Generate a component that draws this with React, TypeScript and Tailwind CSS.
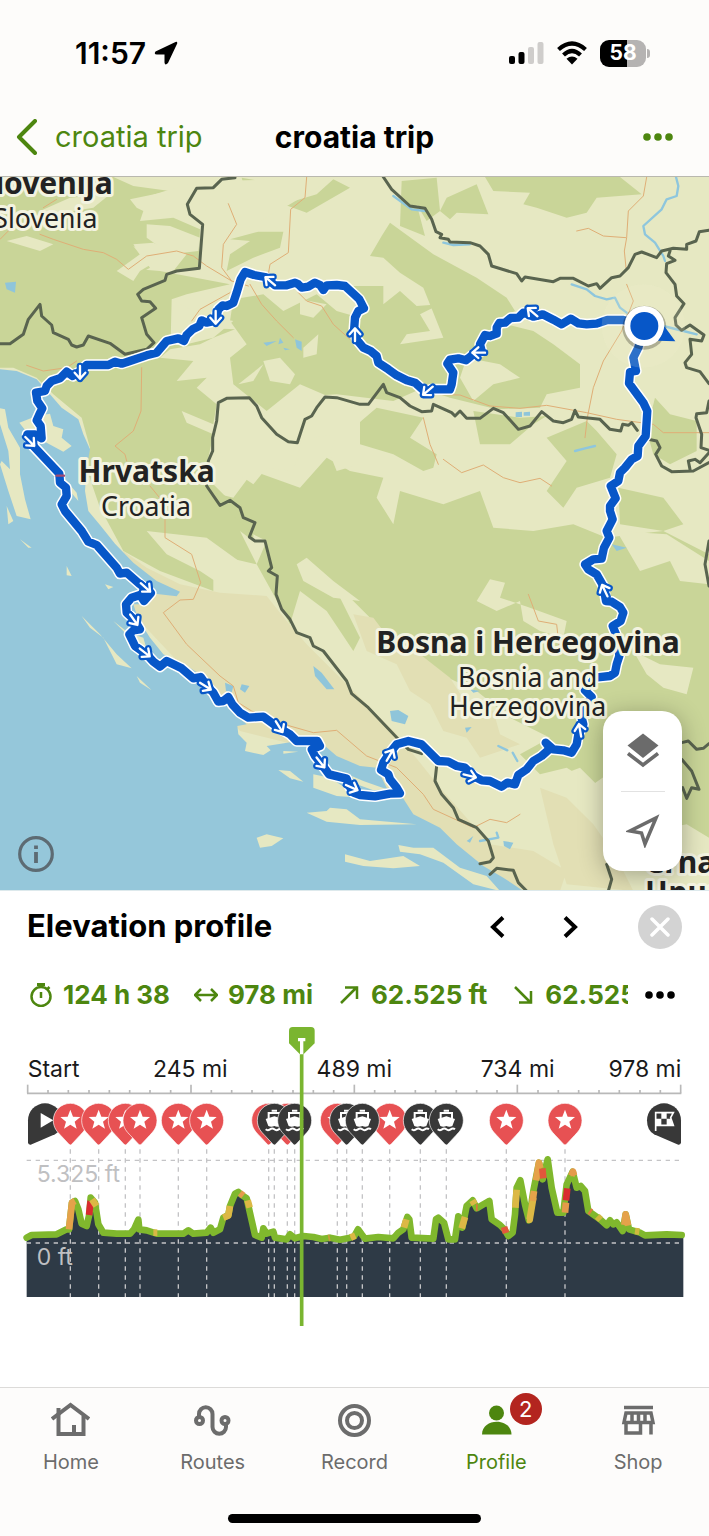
import type { ReactNode } from "react";

const routePath =
  "M1932 465 L1870 447 L1822 447 L1790 458 L1760 460 L1735 457 L1712 443 L1685 460 L1660 446 L1628 430 L1600 437 L1590 432 L1570 425 L1555 440 L1532 441 L1515 455 L1498 456 L1490 470 L1490 488 L1470 495 L1455 492 L1440 520 L1445 540 L1420 550 L1398 568 L1375 562 L1350 566 L1342 578 L1360 605 L1355 640 L1350 655 L1295 655 L1275 662 L1245 635 L1220 628 L1190 613 L1165 595 L1135 575 L1130 555 L1112 540 L1090 530 L1072 508 L1062 480 L1065 440 L1075 420 L1092 412 L1078 385 L1062 370 L1035 345 L1010 342 L980 343 L970 357 L960 342 L945 335 L925 347 L905 350 L895 340 L885 335 L860 343 L825 343 L795 318 L762 312 L735 303 L722 325 L710 365 L700 395 L680 405 L668 403 L655 415 L645 450 L620 455 L605 448 L598 465 L578 475 L560 492 L552 510 L535 502 L500 510 L470 545 L440 553 L390 570 L365 578 L345 572 L325 582 L260 582 L240 602 L218 615 L200 602 L180 622 L155 630 L140 645 L135 660 L108 665 L112 690 L127 712 L118 730 L110 748 L122 765 L125 802 L105 790 L82 790 L100 825 L178 908 L180 935 L198 950 L200 975 L185 1000 L195 1020 L245 1080 L265 1112 L290 1122 L350 1190 L360 1208 L380 1205 L420 1240 L453 1266 L432 1290 L420 1272 L395 1280 L378 1300 L380 1325 L402 1345 L420 1375 L400 1378 L388 1390 L405 1425 L440 1450 L460 1472 L480 1487 L500 1470 L545 1492 L580 1522 L602 1518 L625 1550 L640 1565 L655 1592 L670 1590 L685 1578 L697 1600 L720 1625 L745 1640 L790 1637 L835 1670 L870 1690 L890 1710 L952 1710 L960 1725 L935 1735 L945 1755 L965 1780 L987 1810 L1040 1823 L1048 1845 L1060 1865 L1080 1872 L1125 1876 L1170 1868 L1200 1867 L1190 1850 L1170 1825 L1165 1810 L1143 1797 L1150 1775 L1170 1745 L1190 1720 L1225 1710 L1265 1720 L1290 1745 L1315 1770 L1345 1772 L1370 1785 L1395 1790 L1420 1815 L1445 1828 L1470 1830 L1505 1847 L1522 1835 L1545 1840 L1555 1812 L1580 1795 L1600 1770 L1625 1755 L1650 1733 L1637 1715 L1660 1735 L1690 1738 L1715 1745 L1730 1720 L1735 1690 L1750 1660 L1740 1622 L1760 1600 L1775 1578 L1755 1558 L1785 1520 L1830 1515 L1845 1505 L1850 1480 L1858 1455 L1852 1400 L1838 1365 L1862 1350 L1870 1325 L1860 1308 L1835 1292 L1818 1290 L1810 1245 L1790 1210 L1765 1195 L1755 1180 L1780 1165 L1805 1163 L1812 1130 L1828 1100 L1820 1080 L1838 1045 L1830 1020 L1830 1005 L1847 982 L1832 945 L1855 930 L1860 905 L1875 890 L1895 865 L1913 855 L1915 825 L1937 795 L1942 720 L1930 695 L1887 637 L1890 603 L1908 600 L1900 560 L1915 530 Z";

const forests = [
  "M0 18 H340 L400 45 L510 60 L390 85 L410 110 L430 120 L420 150 L520 140 L600 175 L595 290 L520 300 L560 250 L490 200 L505 245 L430 240 L400 225 L450 290 L380 330 L360 290 L480 300 L690 340 L560 370 L515 385 L512 510 L600 470 L705 475 L640 500 L600 520 L510 535 L480 560 L580 570 L530 630 L620 620 L590 650 L650 700 L640 760 L545 720 L560 755 L640 790 L625 860 L640 940 L700 1000 L760 1050 L760 1110 L720 1080 L770 1180 L640 1150 L640 1260 L480 1200 L370 1140 L300 1010 L255 880 L270 830 L245 740 L160 670 L110 620 L40 590 L0 590 Z",
  "M700 385 L790 370 L850 420 L950 370 L1010 420 L1080 440 L1200 600 L1270 650 L1180 690 L1010 670 L975 672 L900 640 L800 720 L700 640 L690 560 L740 520 L690 450 Z",
  "M850 100 L950 70 L1000 25 L1050 50 L920 125 Z",
  "M775 182 L850 182 L840 230 L760 260 L680 300 L690 250 L750 210 L690 205 Z",
  "M725 20 L870 45 L840 100 L740 75 Z",
  "M1205 30 L1310 20 L1320 120 L1280 150 L1250 100 L1275 195 L1200 165 Z",
  "M1340 80 L1430 40 L1465 130 L1370 125 L1350 145 L1320 120 Z",
  "M1455 18 H1860 L1925 70 L1790 80 L1760 125 L1700 140 L1610 110 L1570 100 L1590 65 L1480 60 Z",
  "M1145 195 L1170 155 L1300 250 L1430 320 L1520 380 L1545 420 L1480 450 L1600 480 L1660 520 L1740 580 L1740 650 L1640 670 L1620 710 L1490 715 L1350 680 L1290 660 L1200 600 L1080 460 L1060 345 L1150 345 L1150 400 L1200 360 L1250 405 L1320 400 L1260 430 L1290 480 L1220 490 L1200 520 L1330 500 L1270 350 L1200 305 L1150 260 L1110 255 Z",
  "M1060 770 L1130 710 L1270 740 L1230 800 L1310 850 L1300 890 L1270 900 L1180 850 L1080 820 Z",
  "M1420 720 L1560 740 L1640 735 L1600 760 L1530 820 L1440 820 Z",
  "M1640 800 L1760 750 L1790 780 L1850 850 L1830 920 L1730 950 L1690 1010 L1640 960 L1700 870 Z",
  "M1965 680 L2010 730 L2090 750 L2090 840 L2010 880 L1960 850 L1940 780 Z",
  "M1855 950 L1990 980 L2050 1060 L1990 1080 L1860 1060 Z",
  "M620 960 L700 980 L760 900 L900 950 L980 860 L1050 900 L1150 920 L1130 980 L1180 1060 L1200 960 L1330 1000 L1440 960 L1480 1070 L1600 1080 L1720 1060 L1820 1100 L1900 1090 L1990 1080 L2127 1150 V2000 L2060 1960 L1960 1980 L1890 1860 L1850 1790 L1780 1840 L1700 1790 L1620 1810 L1560 1750 L1650 1700 L1530 1640 L1430 1560 L1300 1500 L1240 1440 L1150 1380 L1050 1280 L1010 1260 L1080 1400 L1060 1440 L980 1320 L900 1260 L870 1360 L820 1270 L770 1180 L800 1110 L760 1090 Z",
];

const clearings = [
  "M400 90 L560 40 L600 90 L590 150 L520 130 L440 125 Z",
  "M440 160 L510 165 L600 200 L595 240 L510 250 L440 200 Z",
  "M350 300 L420 250 L400 220 L460 215 L520 240 L420 300 L400 330 Z",
  "M120 120 L210 80 L330 70 L280 110 L160 130 L130 170 Z",
  "M20 210 L80 195 L160 220 L120 240 L70 225 Z",
  "M660 690 L750 685 L800 760 L870 820 L900 830 L880 900 L800 890 L760 940 L700 900 L650 830 Z",
  "M920 740 L980 690 L1080 720 V880 L1010 900 L990 850 L1010 790 L940 800 L890 870 Z",
  "M715 640 L790 580 L760 630 Z",
  "M790 570 L840 560 L885 610 L870 640 L810 630 Z",
  "M520 390 L600 430 L700 450 L640 500 L560 520 L515 520 Z",
  "M900 385 L980 400 L940 440 L900 430 Z M910 530 L955 490 L950 550 L910 560 Z",
  "M1400 560 L1500 580 L1560 620 L1480 640 L1420 690 L1380 620 Z",
  "M640 30 L1000 22 L870 100 L780 150 L680 200 L620 290 L600 180 L620 100 Z",
  "M440 1080 L620 1100 L730 1180 L760 1200 L690 1260 L600 1200 L500 1150 Z",
  "M890 1180 L920 1160 L1000 1230 L1080 1290 L1000 1280 L910 1230 Z",
  "M1430 1290 L1470 1225 L1515 1235 L1500 1280 L1590 1310 L1700 1350 L1690 1400 L1620 1380 L1570 1350 L1560 1290 L1490 1320 Z",
  "M1850 1080 L2000 1090 L2127 1170 L2127 1240 L2040 1230 L2010 1170 L1920 1200 Z",
  "M1900 1440 L1980 1480 L2080 1490 L2060 1570 L1990 1550 L1940 1510 Z",
  "M1660 1820 L1740 1790 L1830 1880 L1900 1890 L1950 1990 L2127 2030 V2160 H1850 L1700 1980 Z",
];

// dry karst country behind the coast
const karst =
  "M370 1140 L440 1190 L540 1240 L660 1265 L800 1275 L860 1350 L920 1420 L1040 1540 L1200 1700 L1320 1850 L1470 2020 L1600 2040 L1700 2100 L1680 2160 H1560 L1380 2040 L1200 1900 L1000 1750 L720 1680 L560 1500 L400 1330 Z M1060 1330 L1120 1340 L1180 1420 L1260 1450 L1350 1520 L1400 1600 L1480 1620 L1500 1690 L1560 1720 L1440 1760 L1400 1700 L1330 1680 L1290 1600 L1230 1560 L1190 1480 L1100 1440 Z M1620 1850 L1700 1880 L1780 1960 L1850 2060 L1900 2160 L1700 2140 L1660 2020 Z";

const sea =
  "M0 595 L50 600 L110 625 L150 670 L185 710 L235 745 L250 790 L270 835 L260 890 L255 960 L265 1020 L300 1062 L345 1118 L400 1175 L470 1230 L540 1262 L530 1276 L465 1268 L440 1300 L400 1300 L415 1345 L450 1400 L490 1450 L545 1475 L600 1510 L650 1570 L700 1625 L740 1660 L712 1665 L715 1690 L740 1715 L735 1740 L790 1752 L812 1738 L800 1725 L880 1712 L930 1700 L975 1725 L1010 1755 L1080 1785 L1130 1790 L1160 1850 L1205 1875 L1240 1930 L1320 1970 L1370 2020 L1450 2085 L1510 2120 L1570 2160 H0 Z";

const islands = [
  "M58 755 L110 735 L150 728 L160 765 L190 775 L185 800 L215 825 L190 842 L140 815 L85 790 Z",
  "M0 712 L15 715 L25 770 L60 830 L60 910 L75 985 L92 1045 L50 1035 L25 960 L0 880 L5 870 L30 895 L25 840 L0 760 Z",
  "M195 925 L230 965 L235 990 L205 955 Z M20 1005 L40 1050 L25 1060 Z",
  "M60 1105 L95 1130 L85 1130 Z M200 1185 L215 1215 L200 1213 Z M315 1240 L340 1248 L325 1255 Z",
  "M245 1335 L300 1390 L350 1450 L395 1492 L350 1480 L310 1400 L270 1370 Z",
  "M340 1350 L385 1385 L430 1400 L440 1435 L390 1400 Z M410 1515 L455 1558 L420 1535 Z",
  "M835 1797 L870 1800 L910 1832 L870 1822 Z M850 1740 L895 1742 L850 1748 Z",
  "M940 1810 L990 1820 L1050 1860 L1080 1880 L1010 1875 L940 1850 Z",
  "M920 1925 L980 1920 L990 1910 L1040 1915 L1080 1945 L1250 1960 L1080 1962 L980 1952 Z",
  "M770 2000 L800 1990 L850 2002 L815 2025 L780 2030 Z",
  "M1035 2050 L1110 2070 L1210 2055 L1260 2085 L1180 2092 L1090 2085 L1035 2072 Z",
  "M1195 2022 L1240 2030 L1300 2030 L1380 2090 L1460 2115 L1500 2160 L1420 2140 L1330 2075 L1260 2050 L1200 2042 Z",
  "M1055 1815 L1090 1830 L1160 1855 L1120 1858 L1070 1840 Z",
];

const lakes = [
  "M15 335 L48 332 L45 365 L20 355 Z",
  "M790 515 L830 510 L800 525 Z M840 500 L850 515 L835 520 Z M885 505 L905 512 L905 540 L890 530 Z M850 530 L870 535 L855 538 Z",
  "M675 1535 L700 1545 L695 1565 L678 1560 Z M725 1540 L748 1545 L735 1565 L720 1555 Z",
  "M940 1485 L965 1505 L1003 1555 L980 1555 L945 1515 Z",
  "M1170 1620 L1195 1617 L1225 1635 L1215 1660 L1175 1650 Z M1395 1670 L1415 1668 L1400 1685 Z M1410 1555 L1440 1560 L1420 1565 Z",
  "M1510 2010 L1540 2015 L1530 2035 L1512 2025 Z M1400 2010 L1420 1995 L1410 2015 Z",
  "M1835 1120 L1880 1130 L1850 1140 Z M1547 724 L1566 722 V738 H1547 Z M1571 724 L1590 722 V734 H1571 Z",
];

const rivers = [
  "M2028 18 L2035 45 L2030 75 L2000 85 L1985 115 L1930 165 L1935 190 L1965 215 L1990 255 L1995 270",
  "M1715 340 L1760 355 L1785 375 L1820 385 L1845 380 L1860 410 L1880 425",
  "M1725 840 L1755 832 L1785 825",
  "M1495 1725 L1522 1738 M1538 1745 L1552 1770 M1490 1985 L1495 2000 L1440 2010",
  "M1180 75 L1235 115 L1275 120 M1330 215 L1360 222 L1410 220 M1990 465 L2050 480 L2090 490",
];

const borders = [
  "M0 518 L30 518 L70 490 L85 445 L120 400 L125 435 L155 462 L160 485 L205 505 L215 522 L230 528 L250 522 L265 495 L330 517 L375 550 L440 535 L462 515 L440 490 L425 440 L467 412 L450 392 L425 390 L413 370 L430 355 L495 328 L500 310 L530 300 L598 292 L605 200 L608 160 L570 130 L562 100 L590 52 L640 50 L665 25 L705 20",
  "M1150 18 L1175 55 L1230 105 L1275 112 L1295 145 L1308 182 L1325 190 L1320 200 L1345 205 L1350 213 L1410 215 L1440 225 L1465 250 L1475 285 L1550 308 L1565 330 L1575 318 L1660 332 L1680 322 L1720 322 L1765 345 L1790 338 L1800 352 L1835 320 L1860 315 L1885 290 L1905 250 L1925 243 L1970 260 L1985 240 L2020 232 L2060 235 L2060 220 L2088 210 L2098 182 L2127 178",
  "M2010 240 L2005 255 L2025 268 L2000 278 L1998 305 L2025 340 L2030 375 L2052 398 L2025 440 L2028 462 L2045 478 L2070 462 L2112 492 L2105 510 L2070 505 L2075 550 L2055 575 L2060 590 L2100 602 L2127 638",
  "M2127 690 L2120 725 L2090 728 L2088 740 L2105 790 L2103 830 L2127 838 M1945 805 L1970 810 L1980 830 L1967 850 L1985 885 L2015 902 L2080 900 L2127 875 M2070 895 L2065 870 L2085 865 L2100 875 L2127 845",
  "M1912 778 L1895 755 L1885 763 L1868 760 L1862 780 L1830 775 L1800 745 L1735 738 L1725 718 L1715 745 L1690 755 L1660 750 L1625 722 L1590 765 L1555 775 L1510 725 L1480 712 L1440 742 L1400 742 L1380 720 L1365 735 L1355 725 L1300 700 L1295 720 L1265 722 L1230 705 L1200 680 L1160 665 L1150 640 L1105 700 L1080 700 L1010 680 L975 678 L950 710 L935 735 L915 745 L892 815 L865 812 L830 790 L785 740 L770 705 L748 680 L680 682 L655 695 L650 750 L638 800 L638 840 L625 870 L620 945 L660 1003 L690 988 L720 1010 L730 1040 L765 1055 L748 1098 L765 1110 L795 1110 L815 1190 L805 1200 L832 1215 L828 1270 L845 1315 L870 1345 L890 1385 L930 1400 L940 1425 L970 1440 L1040 1530 L1055 1568 L1105 1610 L1195 1705 L1225 1735 L1265 1748",
  "M1310 1785 L1305 1830 L1325 1870 L1360 1910 L1375 1945 L1430 1970 L1465 2010 L1480 2060 L1470 2072 L1440 2078 M1470 2110 L1490 2092 L1540 2098 L1555 2135 L1580 2160",
  "M1820 2080 L1835 2125 L1825 2160 M2045 1715 L2065 1710 L2090 1735 L2110 1732 L2127 1718 M2045 1765 L2075 1800 L2097 1855 L2075 1850 L2060 1882 L2048 1850 M2127 1110 L2115 1180 L2127 1245",
];

const roads = [
  "M120 190 L160 205 L250 235 L310 245 L350 265 L385 295 L440 255 L530 240 L580 255 L620 285 L695 330 L745 345",
  "M685 98 L710 160 L670 220 L665 290 L695 330",
  "M920 18 L915 80 L872 115 L865 245 L810 280 L805 310",
  "M750 340 L785 400 L830 450 L880 500 M895 365 L920 390 L965 405 L1000 460 L1050 505",
  "M690 365 L600 415 L575 450 M425 590 L423 720 L400 780 L345 825 L375 850 L380 870",
  "M80 583 L130 600 L200 590 L230 570 M450 945 L495 1000 V1100 L575 1150 L602 1235 L580 1285 L540 1287 L490 1325 L560 1420 L660 1515 L700 1545 L715 1595 L755 1620 L870 1665 L940 1685 L1010 1678 L1100 1755 L1190 1790 L1270 1870 L1300 1915 L1420 1970 L1470 1945 L1520 1955 L1560 1930",
  "M1940 18 L1930 75 L1885 120 L1880 200 L1873 240 L1878 290 M1730 180 L1765 172 L1810 195 L1878 200",
  "M1880 340 L1900 390 L1865 480 L1810 570 L1780 650 L1762 740 L1755 800",
  "M1290 670 L1380 672 L1470 705 L1560 712 L1640 703 L1760 725 L1850 745 L1960 760 L1990 785 H2127",
  "M1270 740 L1290 820 L1315 880 M1330 865 L1385 905 L1450 882 L1510 920 L1560 935 L1620 922 L1655 945",
  "M1585 1270 L1615 1350 L1670 1360 L1680 1450 M130 110 L170 85 M0 205 L30 175",
];

const arrows: [number, number, number][] = [
  [810, 330, -140],
  [647, 440, 90],
  [240, 605, 90],
  [90, 812, 45],
  [1065, 490, -90],
  [437, 1250, 42],
  [402, 1347, 55],
  [435, 1445, 38],
  [617, 1546, 32],
  [838, 1668, 58],
  [962, 1775, 52],
  [1056, 1850, 24],
  [1170, 1752, -60],
  [1410, 1815, 14],
  [1740, 1677, -100],
  [1814, 1258, -115],
  [1597, 423, -140],
  [1435, 545, 180],
  [1283, 660, 140],
];

function RouteMap() {
  return (
    <svg viewBox="0 18 2127 2139" className="block h-auto w-full" role="img" aria-label="Route map">
      <rect y="18" width="2127" height="2139" fill="#e6e8c2" />
      <g fill="#c9d598">
        {forests.map((d) => (
          <path key={d} d={d} />
        ))}
      </g>
      <g fill="#e6e8c2">
        {clearings.map((d) => (
          <path key={d} d={d} />
        ))}
      </g>
      <path d={karst} fill="#e2dfb4" />
      <path d={sea} fill="#95c7da" />
      <g fill="#e6e8c2">
        {islands.map((d) => (
          <path key={d} d={d} />
        ))}
      </g>
      <g fill="#8fc5da">
        {lakes.map((d) => (
          <path key={d} d={d} />
        ))}
      </g>
      <g fill="none" strokeLinejoin="round" strokeLinecap="round">
        <g stroke="#8ec6dd" strokeWidth="7">
          {rivers.map((d) => (
            <path key={d} d={d} />
          ))}
        </g>
        <g stroke="#dfae76" strokeWidth="3">
          {roads.map((d) => (
            <path key={d} d={d} />
          ))}
        </g>
        <g stroke="#59644f" strokeWidth="9">
          {borders.map((d) => (
            <path key={d} d={d} />
          ))}
        </g>
        <path d={routePath} stroke="#fff" strokeWidth="34" />
        <path d={routePath} stroke="#0757c8" strokeWidth="25" />
        <path d="M170 914 H192" stroke="#a3486f" strokeWidth="7" />
        {arrows.map(([x, y, angle]) => (
          <g key={`${x}-${y}`} transform={`translate(${x} ${y}) rotate(${angle})`}>
            <path d="M-20 0 H18 M0 -16 L18 0 L0 16" stroke="#0757c8" strokeWidth="20" />
            <path d="M-20 0 H18 M0 -16 L18 0 L0 16" stroke="#fff" strokeWidth="7" />
          </g>
        ))}
      </g>

      {/* current position */}
      <circle cx="1930" cy="465" r="125" fill="#f2f0d4" opacity="0.16" />
      <circle cx="1933" cy="470" r="66" fill="#000" opacity="0.25" />
      <circle cx="1933" cy="465" r="60" fill="#fff" />
      <path d="M1974 509 L2026 511 L1993 466 Q1990 490 1974 509 Z" fill="#0757c8" />
      <circle cx="1933" cy="465" r="42" fill="#0757c8" />

      <g
        className="font-['Noto_Sans',sans-serif]"
        fill="#222"
        stroke="#f3f3e0"
        strokeWidth="18"
        strokeLinejoin="round"
        paintOrder="stroke"
      >
        <g fontSize="90" fontWeight="700">
          <text x="338" y="70" textAnchor="end">Slovenija</text>
          <text x="440" y="934" textAnchor="middle">Hrvatska</text>
          <text x="1584" y="1447" textAnchor="middle">Bosna i Hercegovina</text>
          <text x="1935" y="2105">Crna Gora</text>
          <text x="1935" y="2197">Црна Гора</text>
        </g>
        <g fontSize="80">
          <text x="292" y="172" textAnchor="end">Slovenia</text>
          <text x="438" y="1036" textAnchor="middle">Croatia</text>
          <text x="1583" y="1549" textAnchor="middle">Bosnia and</text>
          <text x="1583" y="1634" textAnchor="middle">Herzegovina</text>
        </g>
      </g>
    </svg>
  );
}

const profile =
  "80,440 95,432 170,430 200,415 207,415 216,335 225,330 235,355 245,398 260,405 268,370 272,320 285,335 295,400 310,425 350,428 390,428 402,415 415,386 418,415 440,418 470,428 550,428 565,418 580,428 620,425 632,410 640,425 660,415 670,380 685,372 690,345 705,308 715,303 725,312 740,322 752,375 765,432 785,440 790,412 800,428 820,422 825,440 860,445 870,430 885,442 910,435 940,438 965,444 990,440 1020,446 1050,440 1063,435 1074,415 1085,430 1095,443 1135,438 1180,442 1195,425 1210,415 1222,378 1228,385 1235,440 1300,443 1308,385 1315,380 1332,395 1345,445 1365,445 1375,376 1387,410 1400,345 1418,328 1430,352 1450,340 1468,330 1475,385 1500,402 1513,415 1525,435 1538,425 1545,370 1550,290 1561,268 1575,340 1587,388 1600,300 1617,215 1628,265 1643,205 1655,290 1672,365 1690,365 1700,280 1718,242 1730,290 1742,285 1755,300 1765,360 1800,385 1820,403 1830,388 1840,400 1850,394 1868,420 1877,370 1887,415 1920,425 1935,433 2000,430 2045,432";

const slopes: [string, string][] = [
  ["#e5a24a", "207,415 216,335 225,330"],
  ["#d92b2f", "267,372 272,330"],
  ["#dcb845", "276,325 289,345"],
  ["#d9b845", "460,425 472,425"],
  ["#dcb845", "670,380 685,374 690,345"],
  ["#e59a4a", "720,306 730,314"],
  ["#dcb845", "743,328 749,350"],
  ["#c99a3a", "985,441 990,440"],
  ["#dcb845", "1052,440 1066,434"],
  ["#dcb845", "1212,410 1219,385"],
  ["#dcb845", "1385,412 1395,378"],
  ["#dcb845", "1417,328 1424,340"],
  ["#d9763f", "1428,350 1433,350"],
  ["#e2573b", "1512,408 1518,426"],
  ["#dcb845", "1546,350 1550,296"],
  ["#dcb845", "1581,386 1589,386 1600,320"],
  ["#e5a24a", "1598,330 1602,300"],
  ["#e5a24a", "1608,268 1617,215 1621,232"],
  ["#e2573b", "1627,232 1630,262"],
  ["#e59a4a", "1695,365 1698,335"],
  ["#d92b2f", "1698,328 1702,292"],
  ["#e59a4a", "1714,254 1719,242 1722,254"],
  ["#d97f3f", "1768,360 1774,364"],
  ["#cfb83f", "1792,376 1802,386"],
  ["#e5a24a", "1873,402 1877,370 1884,404"],
  ["#cfb83f", "1905,420 1918,422"],
];

const stars = [211, 296, 376, 420, 535, 620, 806, 862, 1012, 1169, 1519, 1695];
const ferries = [823, 884, 1040, 1087, 1261, 1339];
const ticks = Array.from({ length: 33 }, (_, i) => Math.round(83 + i * 61.22));

function Pin({ x, color, children }: { x: number; color: string; children: ReactNode }) {
  return (
    <g transform={`translate(${x} 88)`}>
      <path
        d="M-51 0 A51 51 0 0 1 51 0 C51 22 40 34 28 46 L4 72 Q0 76 -4 72 L-28 46 C-40 34 -51 22 -51 0 Z"
        fill={color}
        stroke="#fff"
        strokeWidth="2"
      />
      {children}
    </g>
  );
}

function ElevationChart() {
  return (
    <svg viewBox="0 -192 2127 912" className="block h-auto w-full font-[Inter,sans-serif]" role="img" aria-label="Elevation chart">
      <g fontSize="69" fill="#1a1a1a">
        <text x="83" y="-43">Start</text>
        <text x="571" y="-43" textAnchor="middle">245 mi</text>
        <text x="1063" y="-43" textAnchor="middle">489 mi</text>
        <text x="1553" y="-43" textAnchor="middle">734 mi</text>
        <text x="2044" y="-43" textAnchor="end">978 mi</text>
      </g>
      <g stroke="#b9b9b9" strokeWidth="5">
        <path d="M81 7 H2044" />
        {ticks.map((x, i) => (
          <path key={x} d={`M${x} 7 V${i % 8 === 0 ? -19 : -3}`} />
        ))}
      </g>

      <path d={`M80 618 L${profile.replaceAll(" ", " L")} L2050 436 V618 Z`} fill="#2e3a46" />
      <g fontSize="69" fill="#bfc0c2">
        <text x="110" y="274">5.325 ft</text>
        <text x="110" y="522">0 ft</text>
      </g>
      <g stroke="#c4c4c6" strokeWidth="4" strokeDasharray="13 14">
        <path d="M80 208 H2045 M80 456 H2050" />
        {[...stars, ...ferries].map((x) => (
          <path key={x} d={`M${x} 175 V618`} />
        ))}
      </g>
      <g fill="none" strokeWidth="20" strokeLinejoin="round">
        <polyline points={profile} stroke="#80b82d" strokeLinecap="round" />
        {slopes.map(([color, points]) => (
          <polyline key={points} points={points} stroke={color} />
        ))}
      </g>

      {/* start, waypoints, finish */}
      <path d="M84 88 A51 51 0 0 1 186 88 Q186 120 165 130 L92 161 Q84 162 84 154 Z" fill="#383838" />
      <path d="M122 66 V110 L160 88 Z" fill="#fff" />
      {stars.map((x) => (
        <Pin key={x} x={x} color="#e75153">
          <path d="M0 -32 L8 -11 L30 -10 L13 4 L19 25 L0 13 L-19 25 L-13 4 L-30 -10 L-8 -11 Z" fill="#fff" />
        </Pin>
      ))}
      {ferries.map((x) => (
        <Pin key={x} x={x} color="#383838">
          <path
            d="M-8 -29 H8 M-17 -4 V-22 H17 V-4 M-26 27 Q-20 32 -13 27 T0 27 T13 27 T26 27"
            fill="none"
            stroke="#fff"
            strokeWidth="6"
          />
          <path d="M-26 -4 L0 -12 L26 -4 L18 17 Q9 22 0 17 Q-9 22 -18 17 Z" fill="#fff" />
        </Pin>
      ))}
      <path d="M2043 88 A51 51 0 0 0 1941 88 Q1941 118 1962 130 L2035 161 Q2043 162 2043 154 Z" fill="#383838" />
      <path d="M1967 62 V120 M1967 65 H2020 L2012 80 L2020 103 H1967" fill="none" stroke="#fff" strokeWidth="5" />
      <path d="M1984 65 H2000 V83 H1984 Z M1967 83 H1984 V103 H1967 Z M2000 83 H2013 L2018 103 H2000 Z" fill="#fff" />

      {/* scrubber */}
      <path d="M867 -181 Q867 -192 878 -192 H933 Q944 -192 944 -181 V-143 L905 -105 L867 -143 Z" fill="#7ab530" />
      <path d="M905 -110 V705" stroke="#7ab530" strokeWidth="11" />
      <path d="M905 -154 V-110 M894 -154 H916" stroke="#fff" strokeWidth="10" />
    </svg>
  );
}

const stats = [
  {
    value: "124 h 38",
    icon: (
      <>
        <circle cx="12" cy="13.500" r="9.500" />
        <path d="M12 9 V15 M18.500 6 L20.500 4" />
        <path d="M8 1.500 H16" strokeWidth="3" />
      </>
    ),
  },
  { value: "978 mi", icon: <path d="M1 12 H23 M7 6 L1 12 L7 18 M17 6 L23 12 L17 18" /> },
  { value: "62.525 ft", icon: <path d="M4 20 L20 4 M8 4.500 H20 V16" /> },
  { value: "62.525 ft", icon: <path d="M4 4 L20 20 M8 19.500 H20 V8" /> },
];

const tabs = [
  {
    label: "Home",
    icon: (
      <g fill="none" stroke="currentColor" strokeWidth="4">
        <path d="M1 18 L19.500 4 L38 18" />
        <path d="M7.500 15 V33 H32.500 V15 M7.500 16 V7" />
        <path d="M23 33 V24" />
      </g>
    ),
  },
  {
    label: "Routes",
    icon: (
      <g fill="none" stroke="currentColor" strokeWidth="4">
        <circle cx="6.500" cy="19.500" r="3.500" />
        <circle cx="32" cy="19.500" r="3.500" />
        <path d="M6 16 V13 A6.700 6.700 0 0 1 19.500 13 V26 A6.700 6.700 0 0 0 33 26 V22" />
      </g>
    ),
  },
  {
    label: "Record",
    icon: (
      <g fill="none" stroke="currentColor" strokeWidth="4">
        <circle cx="19.500" cy="19.500" r="14.500" />
        <circle cx="19.500" cy="19.500" r="7.500" />
      </g>
    ),
  },
  {
    label: "Profile",
    badge: "2",
    icon: (
      <g fill="currentColor">
        <circle cx="19.500" cy="12" r="7.500" />
        <path d="M5 33.500 C5 16.500 34.500 16.500 34.500 33.500 Z" />
      </g>
    ),
  },
  {
    label: "Shop",
    icon: (
      <g fill="none" stroke="currentColor" strokeWidth="3.500">
        <path d="M5 6.500 H34" />
        <path d="M7 12 H32 L34 21.500 H5 Z M13 12 V22 M19.500 12 V22 M26 12 V22" />
        <path d="M7 22 V32 H21.500 V22 M32 22 V33.500" />
      </g>
    ),
  },
];

function Dots({ className }: { className: string }) {
  return (
    <svg viewBox="0 0 30 8" className={className} fill="currentColor">
      <circle cx="4" cy="4" r="3.800" />
      <circle cx="15" cy="4" r="3.800" />
      <circle cx="26" cy="4" r="3.800" />
    </svg>
  );
}

export default function App() {
  return (
    <div className="flex min-h-screen flex-col bg-white font-[Inter,sans-serif] text-black">
      <header className="border-b border-[#b9b8ae] bg-[#fdfcfa]">
        {/* Status bar */}
        <div className="flex h-[106px] items-center justify-between pr-[59px] pl-[75px]">
          <div className="flex items-center gap-2">
            <span className="text-[30px] font-semibold">11:57</span>
            <svg viewBox="0 0 24 24" className="size-6">
              <path d="M21.500 1 L1.500 10.500 Q-0.500 13.500 3 13.500 L10.500 13.500 L10.500 21.500 Q11 25 14 22 L23.200 2.500 Q23.500 0 21.500 1 Z" />
            </svg>
          </div>
          <div className="flex items-center gap-3">
            <svg viewBox="0 0 36 24" className="h-6 w-9">
              <rect x="1" y="15" width="6" height="8" rx="2" />
              <rect x="10.500" y="11" width="6" height="12" rx="2" />
              <rect x="20" y="6" width="6" height="17" rx="2" fill="#cfcdcb" />
              <rect x="29.500" y="1" width="6" height="22" rx="2" fill="#cfcdcb" />
            </svg>
            <svg viewBox="0 0 32 24" className="h-6 w-8">
              <path d="M2.500 8.500 Q16 -3.500 29.500 8.500 M7.500 14 Q16 6 24.500 14" fill="none" stroke="#000" strokeWidth="4.200" />
              <path d="M16 23.500 L10.500 17.800 Q16 13 21.500 17.800 Z" />
            </svg>
            <div className="flex items-center gap-px">
              <div className="flex h-[27px] w-[46px] items-center justify-center rounded-[9px] bg-linear-to-r from-black from-58% to-[#b5b3b2] to-58% text-[21px] font-bold text-white">
                58
              </div>
              <div className="h-[9px] w-[3px] rounded-r-full bg-[#b5b3b2]" />
            </div>
          </div>
        </div>
        <nav className="mb-2 grid h-[62px] grid-cols-[1fr_auto_1fr] items-center px-4">
          <a href="#back" className="flex items-center gap-[18px] text-[29px] text-[#4d860f]">
            <svg viewBox="0 0 21 36" className="h-9 w-[21px]" fill="none" stroke="currentColor" strokeWidth="4">
              <path d="M19 2 L3 18 L19 34" strokeLinecap="round" strokeLinejoin="round" />
            </svg>
            croatia trip
          </a>
          <h1 className="text-[30px] font-bold">croatia trip</h1>
          <button type="button" aria-label="More" className="mr-5 justify-self-end text-[#4d860f]">
            <Dots className="h-2 w-[30px]" />
          </button>
        </nav>
      </header>

      <main className="flex-1">
        <section className="relative overflow-hidden">
          <RouteMap />
          <button type="button" aria-label="Map information" className="absolute bottom-[18px] left-[18px] text-[#5d6b73]">
            <svg viewBox="0 0 36 36" className="size-9">
              <circle cx="18" cy="18" r="16.300" fill="none" stroke="currentColor" strokeWidth="3.200" />
              <path d="M18 16 V27 M18 9.500 V13" stroke="currentColor" strokeWidth="3.800" />
            </svg>
          </button>
          <div className="absolute right-[27px] bottom-[19px] flex h-40 w-[79px] flex-col items-center divide-y divide-[#e2e2e2] rounded-[20px] bg-white text-[#6b6b6b] shadow-[0_4px_24px_rgba(0,0,0,0.3)]">
            <button type="button" aria-label="Map layers" className="flex w-11 flex-1 items-center justify-center">
              <svg viewBox="0 0 32 36" className="h-9 w-8">
                <path d="M16 0.500 L31.500 12.500 L16 25 L0.500 12.500 Z" fill="currentColor" />
                <path d="M1 20.500 L16 32 L31 20.500" fill="none" stroke="currentColor" strokeWidth="3.500" />
              </svg>
            </button>
            <button type="button" aria-label="Locate me" className="flex w-11 flex-1 items-center justify-center">
              <svg viewBox="0 0 34 34" className="size-[34px]">
                <path d="M30 4 L19 30 L15.500 19 L4 17 Z" fill="none" stroke="currentColor" strokeWidth="3.500" />
              </svg>
            </button>
          </div>
        </section>

        <section className="border-t border-[#dde9ec] pb-14">
          <div className="flex h-[71px] items-center px-[27px]">
            <h2 className="flex-1 text-[31px] font-bold">Elevation profile</h2>
            <div className="mr-[59px] flex gap-[54px]">
              <button type="button" aria-label="Previous">
                <svg viewBox="0 0 18 24" className="h-6 w-[18px]" fill="none" stroke="currentColor" strokeWidth="4">
                  <path d="M14 2.500 L4 12 L14 21.500" />
                </svg>
              </button>
              <button type="button" aria-label="Next">
                <svg viewBox="0 0 18 24" className="h-6 w-[18px]" fill="none" stroke="currentColor" strokeWidth="4">
                  <path d="M4 2.500 L14 12 L4 21.500" />
                </svg>
              </button>
            </div>
            <button type="button" aria-label="Close" className="flex size-11 items-center justify-center rounded-full bg-[#d3d3d3] text-white">
              <svg viewBox="0 0 20 20" className="size-5" fill="none" stroke="currentColor" strokeWidth="3.500">
                <path d="M2 2 L18 18 M18 2 L2 18" strokeLinecap="round" />
              </svg>
            </button>
          </div>

          <div className="flex h-[65px] items-center pr-[33px] pl-[29px]">
            <ul className="flex flex-1 gap-6 overflow-hidden text-[#4d860f]">
              {stats.map((stat, i) => (
                <li key={i} className="flex shrink-0 items-center gap-2.5 text-[26px] font-bold whitespace-nowrap">
                  <svg viewBox="0 0 24 24" className="size-6" fill="none" stroke="currentColor" strokeWidth="2.500">
                    {stat.icon}
                  </svg>
                  {stat.value}
                </li>
              ))}
            </ul>
            <button type="button" aria-label="More statistics" className="ml-4">
              <Dots className="h-2 w-8" />
            </button>
          </div>

          <ElevationChart />
        </section>
      </main>

      <footer className="border-t border-[#dcdbd9] bg-[#fdfcfb]">
        <nav className="grid h-[126px] grid-cols-5 pt-[13px]">
          {tabs.map((tab) => (
            <a
              key={tab.label}
              href={`#${tab.label.toLowerCase()}`}
              className={`flex flex-col items-center gap-2 text-xl ${
                tab.label === "Profile" ? "text-[#4d860f]" : "text-[#6c6c6c]"
              }`}
            >
              <span className="relative">
                <svg viewBox="0 0 39 39" className="size-[39px]">
                  {tab.icon}
                </svg>
                {tab.badge && (
                  <span className="absolute -top-2 -right-[26px] flex size-8 items-center justify-center rounded-full bg-[#b3251f] text-[22px] text-white">
                    {tab.badge}
                  </span>
                )}
              </span>
              {tab.label}
            </a>
          ))}
        </nav>
        <div className="mx-auto mb-[13px] h-[9px] w-[253px] rounded-full bg-black" />
      </footer>
    </div>
  );
}
